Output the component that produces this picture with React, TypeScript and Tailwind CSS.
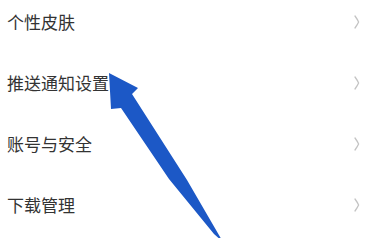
import React from "react";

const items = ["个性皮肤", "推送通知设置", "账号与安全", "下载管理"];

function Chevron() {
  return (
    <svg width="6" height="14" viewBox="0 0 6 14" className="shrink-0">
      <path d="M1 1 Q3.5 4.5 4.6 7 Q3.5 9.5 1 13" fill="none" stroke="#c4c4c4" strokeWidth="1.3" strokeLinecap="round" />
    </svg>
  );
}

export default function App() {
  return (
    <div className="relative w-[371px] h-[238px] overflow-hidden bg-white" style={{ fontFamily: '"Noto Sans CJK SC", "Noto Sans", sans-serif' }}>
      <div className="-mt-[9px] flex flex-col">
        {items.map((t) => (
          <div key={t} className="h-[61px] flex items-center justify-between pl-[7px] pr-[11px]">
            <span className="text-[17px] leading-none text-[#333333]">{t}</span>
            <Chevron />
          </div>
        ))}
      </div>
      <svg className="absolute left-0 top-0" width="371" height="238" viewBox="0 0 371 238">
        <polygon
          points="109,73 138,88 132,94 187,180 223,242 214,234 169,179 121,108 111,109"
          fill="#1c58c6"
        />
      </svg>
    </div>
  );
}
